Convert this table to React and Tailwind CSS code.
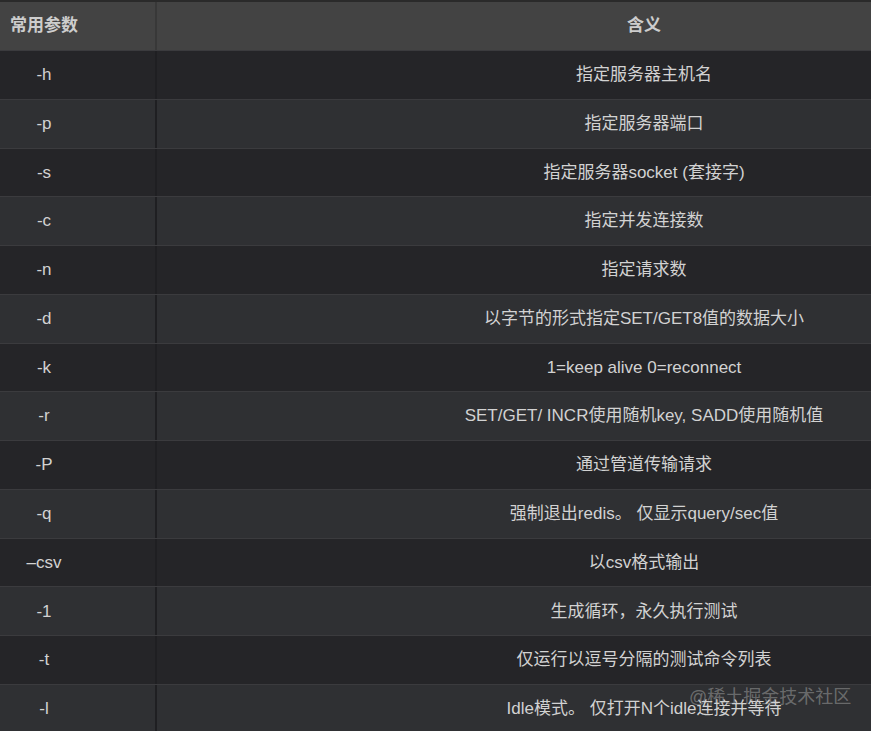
import React from 'react';

const rows = [
  ['-h', '指定服务器主机名'],
  ['-p', '指定服务器端口'],
  ['-s', '指定服务器socket (套接字)'],
  ['-c', '指定并发连接数'],
  ['-n', '指定请求数'],
  ['-d', '以字节的形式指定SET/GET8值的数据大小'],
  ['-k', '1=keep alive 0=reconnect'],
  ['-r', 'SET/GET/ INCR使用随机key, SADD使用随机值'],
  ['-P', '通过管道传输请求'],
  ['-q', '强制退出redis。 仅显示query/sec值'],
  ['–csv', '以csv格式输出'],
  ['-1', '生成循环，永久执行测试'],
  ['-t', '仅运行以逗号分隔的测试命令列表'],
  ['-l', 'Idle模式。 仅打开N个idle连接并等待'],
];

const font = { fontFamily: '"Liberation Sans", "Noto Sans CJK SC", sans-serif' };

const App = () => {
  return (
    <div className="relative h-[731px] w-[871px] overflow-hidden bg-[#252528] text-[17px] text-[#d2d2d2]" style={font}>
      <div className="w-[1131px] border-t-2 border-[#2a2a2a]">
        <div className="flex h-[48px] bg-[#434343] font-bold text-[#cdcdcd]">
          <div className="flex w-[157px] items-center border-r-2 border-[#383838] pl-[10px]">常用参数</div>
          <div className="flex flex-1 items-center justify-center">含义</div>
        </div>
        {rows.map(([flag, desc], i) => (
          <div
            key={flag}
            className={`flex h-[48.77px] border-t border-[#3b3b3e] ${i % 2 === 0 ? 'bg-[#252528]' : 'bg-[#2f3033]'}`}
          >
            <div className="flex w-[157px] items-center border-r-2 border-[#1f1f22]">
              <div className="w-[88px] text-center">{flag}</div>
            </div>
            <div className="flex flex-1 items-center justify-center">{desc}</div>
          </div>
        ))}
      </div>
      <div className="absolute left-[689px] top-[684px] text-[18px] text-[#c8c8c8]/40">@稀土掘金技术社区</div>
    </div>
  );
};

export default App;
